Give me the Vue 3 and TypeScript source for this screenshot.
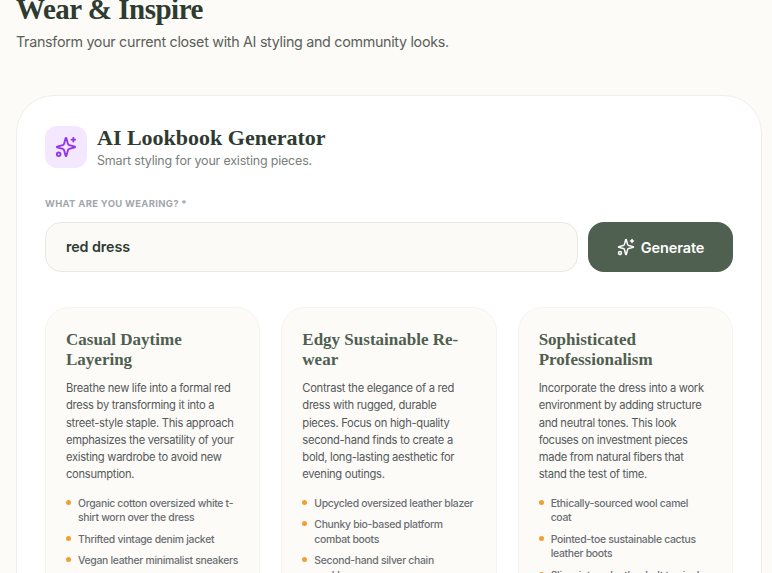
<template>
  <div class="viewport">
    <main class="page">
      <header class="page-head">
        <h1>Wear &amp; Inspire</h1>
        <p>Transform your current closet with AI styling and community looks.</p>
      </header>

      <section class="panel">
        <div class="panel-head">
          <div class="panel-icon">
            <svg class="spark" viewBox="0 0 24 24" width="22" height="22">
              <path v-for="d in sparkPaths" :key="d" :d="d" />
              <circle cx="4" cy="20" r="2" />
            </svg>
          </div>
          <div>
            <h2>AI Lookbook Generator</h2>
            <p>Smart styling for your existing pieces.</p>
          </div>
        </div>

        <label class="field-label">WHAT ARE YOU WEARING? *</label>
        <div class="form-row">
          <div class="text-input">red dress</div>
          <button class="generate" type="button">
            <svg class="spark" viewBox="0 0 24 24" width="18" height="18">
              <path v-for="d in sparkPaths" :key="d" :d="d" />
              <circle cx="4" cy="20" r="2" />
            </svg>
            Generate
          </button>
        </div>

        <div class="looks">
          <article v-for="look in looks" :key="look.title" class="look">
            <h3>{{ look.title }}</h3>
            <p>{{ look.text }}</p>
            <ul>
              <li v-for="item in look.items" :key="item">{{ item }}</li>
            </ul>
          </article>
        </div>
      </section>
    </main>
  </div>
</template>

<script setup lang="ts">
interface Look {
  title: string
  text: string
  items: string[]
}

const sparkPaths: string[] = [
  'M9.937 15.5A2 2 0 0 0 8.5 14.063l-6.135-1.582a.5.5 0 0 1 0-.962L8.5 9.936A2 2 0 0 0 9.937 8.5l1.582-6.135a.5.5 0 0 1 .963 0L14.063 8.5A2 2 0 0 0 15.5 9.937l6.135 1.581a.5.5 0 0 1 0 .964L15.5 14.063a2 2 0 0 0-1.437 1.437l-1.582 6.135a.5.5 0 0 1-.963 0z',
  'M20 2v4',
  'M22 4h-4'
]

const looks: Look[] = [
  {
    title: 'Casual Daytime Layering',
    text: 'Breathe new life into a formal red dress by transforming it into a street-style staple. This approach emphasizes the versatility of your existing wardrobe to avoid new consumption.',
    items: [
      'Organic cotton oversized white t-shirt worn over the dress',
      'Thrifted vintage denim jacket',
      'Vegan leather minimalist sneakers'
    ]
  },
  {
    title: 'Edgy Sustainable Re-wear',
    text: 'Contrast the elegance of a red dress with rugged, durable pieces. Focus on high-quality second-hand finds to create a bold, long-lasting aesthetic for evening outings.',
    items: [
      'Upcycled oversized leather blazer',
      'Chunky bio-based platform combat boots',
      'Second-hand silver chain necklace'
    ]
  },
  {
    title: 'Sophisticated Professionalism',
    text: 'Incorporate the dress into a work environment by adding structure and neutral tones. This look focuses on investment pieces made from natural fibers that stand the test of time.',
    items: [
      'Ethically-sourced wool camel coat',
      'Pointed-toe sustainable cactus leather boots',
      'Slim vintage leather belt to cinch the waist'
    ]
  }
]
</script>

<style>
html,
body {
  margin: 0;
  overflow: hidden;
  background: #fdfbf8;
}
</style>

<style scoped>
.viewport {
  height: 573px;
  overflow: hidden;
  font-family: Inter, "Noto Sans", sans-serif;
}

.page {
  margin-top: -9px;
  padding: 0 10px 0 16px;
}

.page-head h1 {
  margin: 0;
  font-family: "Liberation Serif", serif;
  font-size: 29px;
  line-height: 36px;
  font-weight: 700;
  letter-spacing: -0.5px;
  color: #2e3b30;
}

.page-head p {
  margin: 5px 0 0;
  font-size: 14.3px;
  line-height: 20px;
  letter-spacing: -0.3px;
  color: #5a6159;
}

.panel {
  margin-top: 43px;
  padding: 29px 28px 0;
  background: #fff;
  border: 1px solid #f1eeea;
  border-radius: 38px;
}

.panel-head {
  display: flex;
  align-items: center;
  gap: 10px;
}

.panel-icon {
  flex: none;
  display: flex;
  align-items: center;
  justify-content: center;
  width: 42px;
  height: 42px;
  border-radius: 12px;
  background: #f3e8ff;
  color: #9333ea;
}

.spark {
  flex: none;
  fill: none;
  stroke: currentColor;
  stroke-width: 2;
  stroke-linecap: round;
  stroke-linejoin: round;
}

.panel-head h2 {
  margin: 0;
  font-family: "Liberation Serif", serif;
  font-size: 22px;
  line-height: 26px;
  font-weight: 700;
  color: #2e3b30;
}

.panel-head p {
  margin: 2px 0 0;
  font-size: 12.5px;
  line-height: 16px;
  letter-spacing: -0.2px;
  color: #7a807b;
}

.field-label {
  display: block;
  margin-top: 28px;
  font-size: 9.5px;
  line-height: 14px;
  font-weight: 700;
  letter-spacing: 0.3px;
  color: #a3a7ad;
}

.form-row {
  display: flex;
  gap: 10px;
  margin-top: 11px;
}

.text-input {
  flex: 1;
  display: flex;
  align-items: center;
  box-sizing: border-box;
  height: 50px;
  padding: 0 20px 2px;
  background: #fbfaf6;
  border: 1px solid #ebe8e2;
  border-radius: 16px;
  font-size: 14.3px;
  font-weight: 600;
  letter-spacing: -0.1px;
  color: #2e3b30;
}

.generate {
  flex: none;
  display: flex;
  align-items: center;
  justify-content: center;
  gap: 6px;
  width: 145px;
  height: 50px;
  padding: 0;
  background: #4f5f50;
  border: 0;
  border-radius: 16px;
  font-family: inherit;
  font-size: 14.5px;
  font-weight: 600;
  letter-spacing: -0.1px;
  color: #fff;
}

.looks {
  display: grid;
  grid-template-columns: repeat(3, 1fr);
  gap: 21px;
  margin-top: 35px;
}

.look {
  padding: 22px 20px 21px;
  background: #fcfbf8;
  border: 1px solid #f6f4ef;
  border-radius: 24px;
}

.look h3 {
  margin: 0;
  font-family: "Liberation Serif", serif;
  font-size: 17px;
  line-height: 20px;
  font-weight: 700;
  color: #4f5f50;
}

.look p {
  margin: 10px 0 0;
  padding-right: 2px;
  font-size: 11.2px;
  line-height: 17.25px;
  letter-spacing: -0.3px;
  color: #55595a;
}

.look ul {
  margin: 13px 0 0;
  padding: 0;
  list-style: none;
}

.look li {
  position: relative;
  margin-bottom: 7px;
  padding: 0 1px 0 12px;
  font-size: 10.4px;
  line-height: 14.6px;
  font-weight: 500;
  letter-spacing: -0.3px;
  color: #6a6e72;
}

.look li::before {
  content: "";
  position: absolute;
  left: 0;
  top: 3px;
  width: 5px;
  height: 5px;
  border-radius: 50%;
  background: #f0a030;
}
</style>
